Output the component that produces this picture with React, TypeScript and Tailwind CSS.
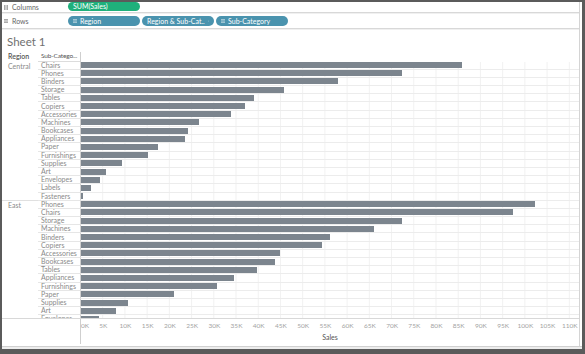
import React from "react";

type Row = [string, number];

// sales per sub-category, in dollars
const REGIONS: { name: string; rows: Row[] }[] = [
  {
    name: "Central",
    rows: [
      ["Chairs", 85733],
      ["Phones", 72232],
      ["Binders", 57831],
      ["Storage", 45680],
      ["Tables", 38929],
      ["Copiers", 36904],
      ["Accessories", 33753],
      ["Machines", 26553],
      ["Bookcases", 24010],
      ["Appliances", 23335],
      ["Paper", 17259],
      ["Furnishings", 15077],
      ["Supplies", 9293],
      ["Art", 5693],
      ["Envelopes", 4343],
      ["Labels", 2318],
      ["Fasteners", 518],
    ],
  },
  {
    name: "East",
    rows: [
      ["Phones", 102160],
      ["Chairs", 97210],
      ["Storage", 72232],
      ["Machines", 65932],
      ["Binders", 56031],
      ["Copiers", 54230],
      ["Accessories", 44780],
      ["Bookcases", 43654],
      ["Tables", 39604],
      ["Appliances", 34428],
      ["Furnishings", 30603],
      ["Paper", 20995],
      ["Supplies", 10644],
      ["Art", 7808],
      ["Envelopes", 4118],
      ["Labels", 2602],
      ["Fasteners", 819],
    ],
  },
];

const PX_PER_K = 4.444;
const TICKS = Array.from({ length: 23 }, (_, i) => i * 5);

function ListIcon({ color = "currentColor" }: { color?: string }) {
  return (
    <svg viewBox="0 0 4 4" className="h-[4px] w-[4px] shrink-0" fill="none" stroke={color} strokeWidth="0.7">
      <path d="M0 0.6h4M0 2h4M0 3.4h4" />
    </svg>
  );
}

function ColumnsIcon() {
  return (
    <svg viewBox="0 0 4 5" className="h-[5px] w-[4px] shrink-0" fill="none" stroke="#777" strokeWidth="0.7">
      <path d="M0.4 0v5M2 0v5M3.6 0v5" />
    </svg>
  );
}

function Pill({ label, color, lead, trail }: { label: string; color: string; lead?: boolean; trail?: boolean }) {
  return (
    <div className={`flex h-[10px] w-[72px] shrink-0 items-center gap-[3px] rounded-full px-[5px] text-[7px] leading-none text-white ${color}`}>
      {lead && <ListIcon color="rgba(255,255,255,0.75)" />}
      <span className="whitespace-nowrap">{label}</span>
      {trail && (
        <svg viewBox="0 0 5 5" className="ml-auto h-[5px] w-[5px]" fill="none" stroke="white" strokeWidth="0.8">
          <path d="M0.5 0.5h4M4.5 0.5v2.5M2 2h1.6" />
        </svg>
      )}
    </div>
  );
}

export default function App() {
  return (
    <div className="flex h-[354px] w-[585px] flex-col bg-[#5b5b5b] pb-[5px] pl-[2px] pr-[3px] pt-[2px] font-['Lato','Noto_Sans',sans-serif]">
      <div className="flex flex-1 flex-col bg-white">
        <div className="mr-[2px] flex flex-1 flex-col border-r border-[#d4d4d4]">
          {/* Shelves */}
          <div className="flex h-[10px] items-start">
            <div className="flex w-[66px] items-center gap-[4px] pl-[2px] pt-[2px] text-[7px] leading-none text-[#666]">
              <ColumnsIcon />
              <span>Columns</span>
            </div>
            <div className="flex h-[9px] w-[72px] items-center rounded-full bg-[#1fb07b] px-[5px] text-[7px] leading-none text-white">
              SUM(Sales)
            </div>
          </div>
          <div className="h-[2px] border-t border-[#d8d8d8] bg-[#f0f0f0]" />
          <div className="flex h-[14px] items-center">
            <div className="flex w-[66px] items-center gap-[4px] pl-[2px] text-[7px] leading-none text-[#666]">
              <ListIcon color="#777" />
              <span>Rows</span>
            </div>
            <div className="flex gap-[2px]">
              <Pill label="Region" color="bg-[#4a93ae]" lead />
              <Pill label="Region & Sub-Cat.." color="bg-[#4a93ae]" trail />
              <Pill label="Sub-Category" color="bg-[#4a93ae]" lead />
            </div>
          </div>
          <div className="h-[2px] border-t border-[#d8d8d8] bg-[#f0f0f0]" />

          {/* Title */}
          <div className="flex h-[22px] items-center pl-[5px] pt-[1px] text-[11.5px] leading-none text-[#707070]">Sheet 1</div>

          {/* Header */}
          <div className="flex h-[9.5px] text-[7px] leading-none">
            <div className="flex w-[36px] shrink-0 items-center pl-[6px] font-semibold text-[#555]">Region</div>
            <div className="flex w-[42px] shrink-0 items-center overflow-hidden whitespace-nowrap border-b border-[#dcdcdc] pl-[3px] text-[6.5px] tracking-[-0.15px] text-[#555]">Sub-Catego...</div>
            <div className="flex-1 border-l border-[#cfcfcf]" />
          </div>

          {/* Rows */}
          <div className="h-[256.5px] overflow-hidden text-[7px] leading-none">
            {REGIONS.map((g) => (
              <div key={g.name} className="flex">
                <div className="w-[36px] shrink-0 border-b border-[#e0e0e0] pl-[6px] leading-[8.2px] text-[#8a8a8a]">{g.name}</div>
                <div className="flex-1">
                  {g.rows.map(([label, sales]) => (
                    <div key={label} className="flex h-[8.2px]">
                      <div className="flex w-[42px] shrink-0 items-center overflow-hidden whitespace-nowrap border-b border-[#e6e6e6] pl-[3px] text-[#8a8a8a]">{label}</div>
                      <div className="flex flex-1 items-center border-b border-l border-b-[#ececec] border-l-[#cfcfcf] bg-[linear-gradient(to_right,#f1f1f1_1px,transparent_1px)] bg-[length:22.222px_100%] bg-[position:-1px_0]">
                        <div className="h-[6px] bg-[#7c858e]" style={{ width: (sales / 1000) * PX_PER_K }} />
                      </div>
                    </div>
                  ))}
                </div>
              </div>
            ))}
          </div>

          {/* Axis */}
          <div className="flex h-[28px] border-t border-[#d8d8d8]">
            <div className="w-[78px] shrink-0" />
            <div className="relative mb-[2px] flex-1 border-l border-[#cfcfcf]">
              {TICKS.map((t) => (
                <span
                  key={t}
                  className={`absolute top-[3px] text-[6.5px] leading-[7px] whitespace-nowrap text-[#a3a3a3] ${t === 0 ? "" : "-translate-x-1/2"}`}
                  style={{ left: t === 0 ? 0 : t * PX_PER_K }}
                >
                  {t}K
                </span>
              ))}
              <div className="absolute inset-x-0 top-[15px] text-center text-[7px] leading-[7px] text-[#555]">Sales</div>
            </div>
          </div>
        </div>
        <div className="h-[3px] border-t border-[#d0d0d0] bg-[#ededed]" />
      </div>
    </div>
  );
}
